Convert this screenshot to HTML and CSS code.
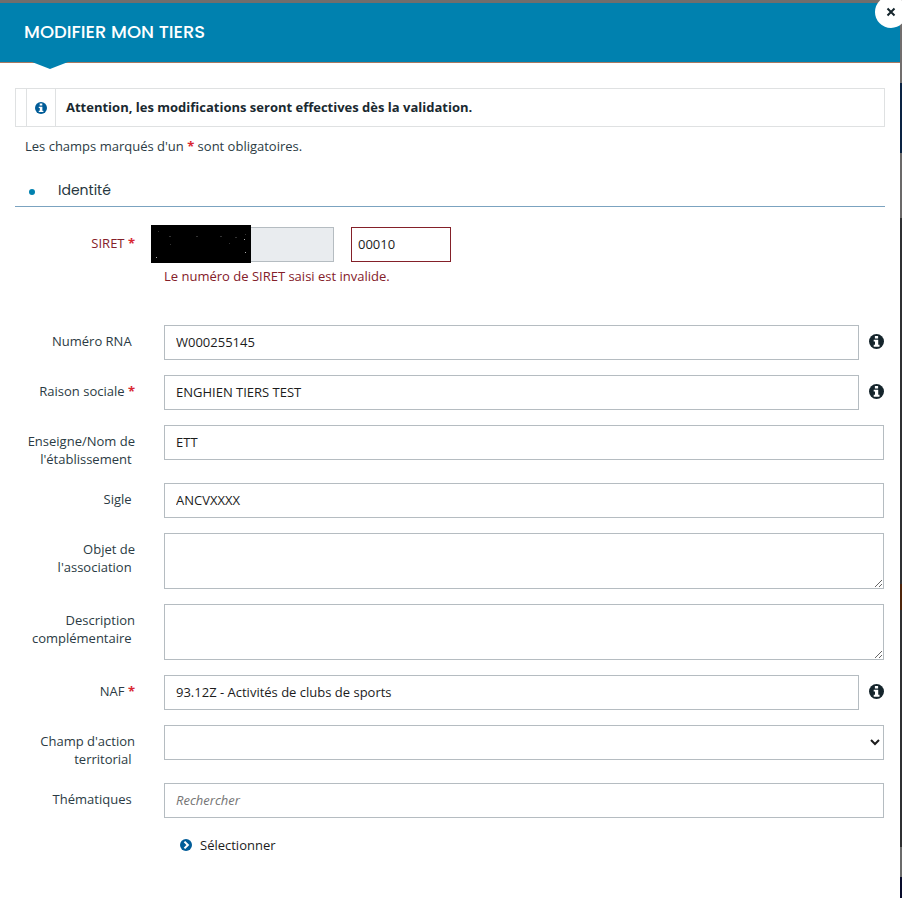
FILE: index.html
```html
<!DOCTYPE html>
<html lang="fr">
<head>
<meta charset="utf-8">
<meta name="viewport" content="width=device-width, initial-scale=1">
<title>Modifier mon tiers</title>
<link rel="stylesheet" href="styles.css">
</head>
<body>
<svg class="sprite" aria-hidden="true">
  <symbol id="info" viewBox="0 0 14 14">
    <circle cx="7" cy="7" r="7" fill="currentColor"/>
    <path d="M5.5 1.8h3v2.3h-3zM4.4 5.4h4.2v4.7h1.2v1.7H4.4v-1.7h1.2V7.1H4.4z" fill="#fff"/>
  </symbol>
</svg>
<main class="modal">
  <header class="modal-header">
    <h1 class="modal-title">MODIFIER MON TIERS</h1>
    <button class="close" type="button" aria-label="Fermer">
      <svg width="10" height="10" viewBox="0 0 10 10"><path d="M1.5 1.5l7 7M8.5 1.5l-7 7" stroke="currentColor" stroke-width="2"/></svg>
    </button>
  </header>
  <form class="modal-body">
    <div class="alert">
      <span class="alert-icon"><svg width="12" height="12"><use href="#info"/></svg></span>
      <strong class="alert-text">Attention, les modifications seront effectives dès la validation.</strong>
    </div>
    <p class="note">Les champs marqués d'un <b class="required">*</b> sont obligatoires.</p>
    <h2 class="section-title">Identité</h2>

    <div class="row row-siret">
      <label class="label label-error" for="nic">SIRET <b class="required">*</b></label>
      <div>
        <div class="siret">
          <div class="siren">
            <input class="control" type="text" aria-label="SIREN" disabled>
            <svg class="mask" viewBox="0 0 100 38" aria-hidden="true">
              <rect width="100" height="38"/>
              <g fill="#aaa"><rect x="93" y="14" width="1" height="1"/><rect x="5" y="32" width="1" height="1"/><rect x="94" y="27" width="1" height="1"/></g>
              <g fill="#333"><rect x="7" y="6" width="1" height="1"/><rect x="18" y="11" width="2" height="1"/><rect x="45" y="11" width="2" height="1"/><rect x="69" y="11" width="2" height="1"/><rect x="84" y="12" width="2" height="1"/><rect x="78" y="18" width="1" height="1"/><rect x="94" y="9" width="1" height="1"/><rect x="19" y="19" width="1" height="1"/></g>
            </svg>
          </div>
          <input class="control nic" id="nic" type="text" value="00010" aria-describedby="nic-error">
        </div>
        <p class="error" id="nic-error">Le numéro de SIRET saisi est invalide.</p>
      </div>
    </div>

    <div class="row">
      <label class="label" for="rna">Numéro RNA&nbsp;</label>
      <div class="field"><input class="control" id="rna" type="text" value="W000255145"><svg class="help" width="15" height="15"><use href="#info"/></svg></div>
    </div>
    <div class="row">
      <label class="label" for="raison">Raison sociale <b class="required">*</b></label>
      <div class="field"><input class="control" id="raison" type="text" value="ENGHIEN TIERS TEST"><svg class="help" width="15" height="15"><use href="#info"/></svg></div>
    </div>
    <div class="row">
      <label class="label" for="enseigne">Enseigne/Nom de l'établissement&nbsp;</label>
      <div class="field"><input class="control" id="enseigne" type="text" value="ETT"></div>
    </div>
    <div class="row">
      <label class="label" for="sigle">Sigle&nbsp;</label>
      <div class="field"><input class="control" id="sigle" type="text" value="ANCVXXXX"></div>
    </div>
    <div class="row">
      <label class="label" for="objet">Objet de l'association&nbsp;</label>
      <div class="field"><textarea class="control area" id="objet"></textarea></div>
    </div>
    <div class="row">
      <label class="label" for="description">Description complémentaire&nbsp;</label>
      <div class="field"><textarea class="control area" id="description"></textarea></div>
    </div>
    <div class="row">
      <label class="label" for="naf">NAF <b class="required">*</b></label>
      <div class="field"><input class="control" id="naf" type="text" value="93.12Z - Activités de clubs de sports"><svg class="help" width="15" height="15"><use href="#info"/></svg></div>
    </div>
    <div class="row">
      <label class="label" for="champ">Champ d'action territorial&nbsp;</label>
      <div class="field"><select class="control" id="champ"><option></option></select></div>
    </div>
    <div class="row">
      <label class="label" for="themes">Thématiques&nbsp;</label>
      <div class="field"><input class="control" id="themes" type="text" placeholder="Rechercher"></div>
    </div>
    <button class="select-link" type="button">
      <svg width="12" height="12" viewBox="0 0 11 11"><circle cx="5.5" cy="5.5" r="5.5" fill="#005c98"/><path d="M4.1 2.4l3.1 3.1-3.1 3.1" fill="none" stroke="#fff" stroke-width="1.9"/></svg>
      Sélectionner
    </button>
  </form>
</main>
</body>
</html>
```

FILE: styles.css
```css
* {
  box-sizing: border-box;
}

body {
  margin: 0;
  padding: 3px 2px 0 0;
  min-height: 100vh;
  display: flex;
  overflow: hidden;
  font: 13px/18px "Open Sans", sans-serif;
  color: #2b3b44;
  /* Dimmed page behind the dialog */
  background: linear-gradient(#716e6d 83px, #0a2343 83px 153px, #6b6969 153px 218px, #2f3032 218px 584px, #4f250b 584px 610px, #2f3032 610px 847px, #6b6b6b 847px 877px, #080b2b 877px);
}

.sprite {
  position: absolute;
  width: 0;
  height: 0;
}

.modal {
  flex: 1;
  background: #fff;
}

.modal-header {
  position: relative;
  height: 60px;
  padding: 0 24px 2px;
  display: flex;
  align-items: center;
  background: #0081af;
  border-bottom: 1px solid #a87961;
}

.modal-header::after {
  content: "";
  position: absolute;
  left: 32px;
  top: 59px;
  width: 36px;
  height: 7px;
  background: #0081af;
  clip-path: polygon(0 0, 100% 0, 50% 100%);
}

.modal-title {
  margin: 0;
  font: 500 18px/24px Poppins, Inter, sans-serif;
  color: #fff;
}

.close {
  position: absolute;
  top: -7px;
  right: -7px;
  width: 32px;
  height: 32px;
  padding: 0;
  display: grid;
  place-items: center;
  border: 0;
  border-radius: 50%;
  background: #fff;
  color: #15252c;
}

.modal-body {
  padding: 25px 15px 0;
}

.alert {
  display: flex;
  height: 39px;
  padding-left: 10px;
  border: 1px solid #dfe1e2;
}

.alert-icon {
  width: 30px;
  display: grid;
  place-items: center;
  border: solid #dfe1e2;
  border-width: 0 1px;
  color: #005c98;
}

.alert-text {
  padding: 9px 10px;
  color: #1a2930;
}

.note {
  margin: 10px 10px 0;
}

.required {
  color: #d92732;
}

.section-title {
  display: flex;
  align-items: center;
  gap: 23px;
  height: 34px;
  margin: 18px 0 20px;
  padding-left: 14px;
  border-bottom: 1px solid #7ba3c0;
  font: 400 14px/20px Poppins, Inter, sans-serif;
  color: #26363e;
}

.section-title::before {
  content: "";
  width: 6px;
  height: 6px;
  margin-top: 4px;
  border-radius: 50%;
  background: #0081af;
}

.row {
  display: grid;
  grid-template-columns: 120px 1fr;
  column-gap: 29px;
  margin: 0 1px 15px 0;
}

.row-siret {
  margin-bottom: 40px;
}

.label {
  padding-top: 7px;
  text-align: right;
}

.label-error,
.error {
  color: #842029;
}

.error {
  margin: 5px 0 0;
}

.field {
  display: flex;
  align-items: flex-start;
  gap: 10px;
}

.help {
  flex: none;
  margin-top: 9px;
  color: #15252c;
}

.control {
  display: block;
  width: 100%;
  min-width: 0;
  height: 35px;
  margin: 0;
  padding: 0 11px 1px;
  border: 1px solid #b5bcc1;
  border-radius: 0;
  background: #fff;
  font: inherit;
  color: #1c1c1c;
}

.control::placeholder {
  font-style: italic;
  color: #757575;
}

.control:disabled {
  background: #e9ecef;
}

select.control {
  padding: 0 1px 0 0;
}

.area {
  height: 56px;
  resize: vertical;
}

.siret {
  display: flex;
  gap: 17px;
}

.siren {
  position: relative;
  width: 170px;
}

.mask {
  position: absolute;
  left: -13px;
  top: -2px;
  width: 100px;
  height: 38px;
}

.nic {
  width: 100px;
  padding: 0 6px 1px;
  border-color: #842029;
}

.select-link {
  display: flex;
  align-items: center;
  gap: 8px;
  margin-left: 165px;
  padding: 3px 0;
  border: 0;
  background: none;
  font: inherit;
  color: #1c1c1c;
}
```
